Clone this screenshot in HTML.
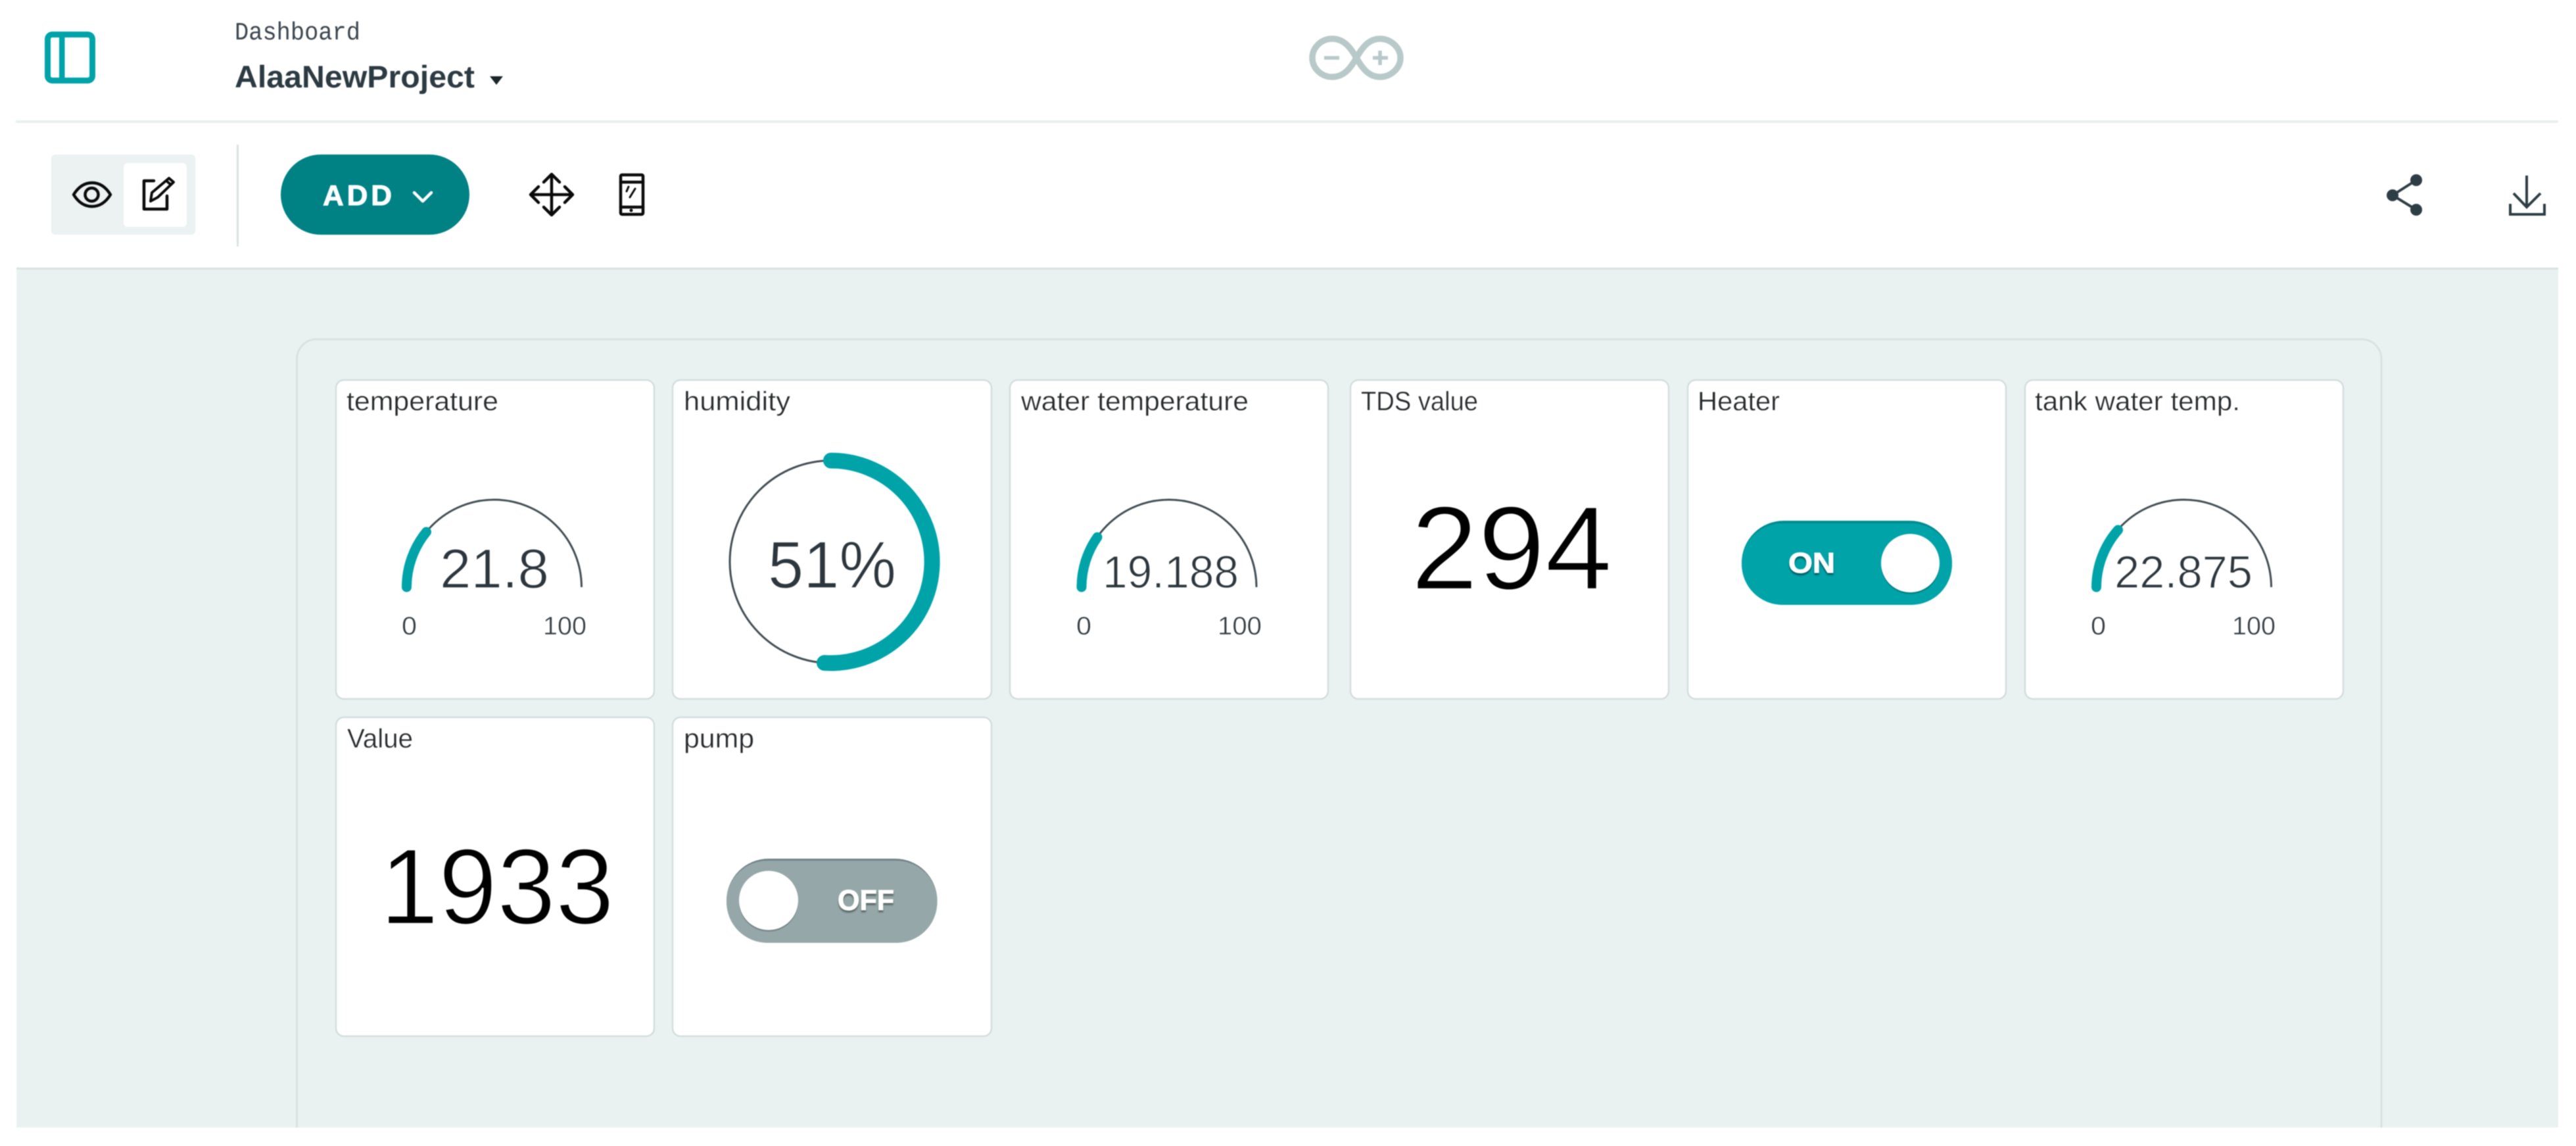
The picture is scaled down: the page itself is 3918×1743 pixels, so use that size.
<!DOCTYPE html>
<html><head><meta charset="utf-8"><title>Dashboard</title>
<style>
html,body{margin:0;padding:0;background:#fff;width:3918px;height:1743px;overflow:hidden}
svg{display:block;filter:blur(.8px)}
text{font-family:"Liberation Sans",Arial,sans-serif}
.t{font-size:41px;fill:#26292b;stroke:#fff;stroke-width:.4px}
.v{fill:#2c363c;stroke:#fff;stroke-width:1.2px}
.b{fill:#000;stroke:#fff;stroke-width:2.5px}
.l{font-size:39px;fill:#333b40;stroke:#fff;stroke-width:.5px}
.card{fill:#fff;stroke:#d2dddc;stroke-width:2.500}
.arc{fill:none;stroke:#424d53;stroke-width:3}
.teal{fill:none;stroke:#00a3a8;stroke-linecap:round}
.ic{fill:none;stroke:#0a0a0a;stroke-width:4.500;stroke-linecap:round;stroke-linejoin:round}
</style></head><body>
<svg width="3918" height="1743" viewBox="0 0 3918 1743" xmlns="http://www.w3.org/2000/svg">
<rect width="3918" height="1743" fill="#fff"/>
<!-- header -->
<rect x="72.500" y="52.500" width="68" height="70" rx="7" fill="none" stroke="#00a3a8" stroke-width="9"/>
<rect x="90" y="52" width="8.500" height="71" fill="#00a3a8"/>
<text x="357" y="60" textLength="191" lengthAdjust="spacingAndGlyphs" style="font-family:'Liberation Mono',monospace;font-size:38px;fill:#3c454e">Dashboard</text>
<text x="357" y="133" textLength="365" lengthAdjust="spacingAndGlyphs" style="font-size:47px;font-weight:700;fill:#2c3a42">AlaaNewProject</text>
<path d="M745 116H765L755 129Z" fill="#1d2529"/>
<g fill="none" stroke="#b8c9c9" stroke-width="9.500">
<path d="M2063 88C2054 72 2044 59 2026 59C2010 59 1996 72 1996 88C1996 104 2010 117 2026 117C2044 117 2054 104 2063 88C2072 72 2082 59 2099 59C2115 59 2130 72 2130 88C2130 104 2115 117 2099 117C2082 117 2072 104 2063 88Z"/>
<path d="M2014 88H2037M2088 88H2111M2099 77V99" stroke-width="5.500"/>
</g>
<rect x="24" y="183" width="3867" height="4" fill="#e9f0ef"/>
<!-- toolbar -->
<rect x="78" y="235" width="219" height="122" rx="6" fill="#ecf1f1"/>
<rect x="188" y="248" width="96" height="97" rx="6" fill="#fff"/>
<path class="ic" d="M112 296C120 283 130 278 140 278C150 278 160 283 168 296C160 309 150 314 140 314C130 314 120 309 112 296Z"/>
<circle class="ic" cx="139.500" cy="296" r="10"/>
<path class="ic" d="M234 275H219V318H254V298"/>
<path class="ic" style="stroke-width:4" d="M229 306L231 293L257 271L264 277L240 300ZM253 275L260 281"/>
<rect x="360" y="220" width="3" height="155" fill="#dae3e3"/>
<rect x="427" y="235" width="287" height="122" rx="61" fill="#008184"/>
<text x="491" y="312" textLength="105" lengthAdjust="spacing" style="font-size:44px;font-weight:700;fill:#fff;stroke:#fff;stroke-width:1px">ADD</text>
<path d="M630 293L643 306L656 293" fill="none" stroke="#fff" stroke-width="4.500" stroke-linecap="round" stroke-linejoin="round"/>
<path class="ic" d="M839 266V326M808 296H870M827 277L839 265L851 277M827 315L839 327L851 315M819 284L807 296L819 308M859 284L871 296L859 308"/>
<rect class="ic" x="944" y="266" width="34" height="60" rx="2"/>
<path class="ic" d="M944 277H978M944 315H978"/>
<circle cx="960" cy="320" r="2.500" fill="#0a0a0a"/>
<path class="ic" style="stroke-width:3" d="M956 284L953 291M966 287L958 300"/>
<g fill="#2e3d44"><circle cx="3675" cy="274" r="9"/><circle cx="3639" cy="297" r="9"/><circle cx="3675" cy="319" r="9"/></g>
<path d="M3675 274L3639 297L3675 319" fill="none" stroke="#2e3d44" stroke-width="4"/>
<path d="M3843 267V315M3823 294L3843 315L3864 294M3818 310V326H3870V310" fill="none" stroke="#2e3d44" stroke-width="4"/>
<!-- canvas -->
<rect x="25" y="408" width="3866" height="1307" fill="#eaf2f1"/>
<rect x="25" y="407" width="3866" height="3" fill="#d8e2e1"/>
<path d="M451.500 1715V546A30 30 0 0 1 481.500 516H3592A30 30 0 0 1 3622 546V1715" fill="none" stroke="#d8e2e1" stroke-width="3"/>
<!-- cards -->
<rect class="card" x="511" y="578" width="484" height="485" rx="12"/>
<rect class="card" x="1023" y="578" width="485" height="485" rx="12"/>
<rect class="card" x="1536" y="578" width="484" height="485" rx="12"/>
<rect class="card" x="2054" y="578" width="484" height="485" rx="12"/>
<rect class="card" x="2567" y="578" width="484" height="485" rx="12"/>
<rect class="card" x="3080" y="578" width="484" height="485" rx="12"/>
<rect class="card" x="511" y="1091" width="484" height="485" rx="12"/>
<rect class="card" x="1023" y="1091" width="485" height="485" rx="12"/>
<!-- titles -->
<text class="t" x="527" y="624" textLength="231" lengthAdjust="spacingAndGlyphs">temperature</text>
<text class="t" x="1040" y="624" textLength="162" lengthAdjust="spacingAndGlyphs">humidity</text>
<text class="t" x="1553" y="624" textLength="346" lengthAdjust="spacingAndGlyphs">water temperature</text>
<text class="t" x="2070" y="624" textLength="178" lengthAdjust="spacingAndGlyphs">TDS value</text>
<text class="t" x="2582" y="624" textLength="125" lengthAdjust="spacingAndGlyphs">Heater</text>
<text class="t" x="3095" y="624" textLength="312" lengthAdjust="spacingAndGlyphs">tank water temp.</text>
<text class="t" x="528" y="1137" textLength="100" lengthAdjust="spacingAndGlyphs">Value</text>
<text class="t" x="1040" y="1137" textLength="107" lengthAdjust="spacingAndGlyphs">pump</text>
<!-- gauge 1 -->
<path class="arc" d="M618.500 893A133 133 0 0 1 884.500 893"/>
<path class="teal" stroke-width="15" d="M618.500 893A133 133 0 0 1 648.500 809"/>
<text class="v" x="669" y="894" textLength="166" lengthAdjust="spacingAndGlyphs" font-size="84">21.8</text>
<text class="l" x="611" y="965" textLength="23" lengthAdjust="spacingAndGlyphs">0</text>
<text class="l" x="826" y="965" textLength="66" lengthAdjust="spacingAndGlyphs">100</text>
<!-- humidity -->
<circle cx="1264" cy="854.500" r="154" fill="none" stroke="#424d53" stroke-width="3"/>
<path class="teal" stroke-width="24" d="M1264 700.500A154 154 0 1 1 1254 1008.200"/>
<text class="v" x="1168" y="894" textLength="195" lengthAdjust="spacingAndGlyphs" font-size="101">51%</text>
<!-- gauge 3 -->
<path class="arc" d="M1645 893A133 133 0 0 1 1911 893"/>
<path class="teal" stroke-width="15" d="M1645 893A133 133 0 0 1 1669 817"/>
<text class="v" x="1677" y="894" textLength="207" lengthAdjust="spacingAndGlyphs" font-size="70">19.188</text>
<text class="l" x="1637" y="965" textLength="23" lengthAdjust="spacingAndGlyphs">0</text>
<text class="l" x="1852" y="965" textLength="67" lengthAdjust="spacingAndGlyphs">100</text>
<!-- 294 -->
<text class="b" x="2146" y="896" textLength="306" lengthAdjust="spacingAndGlyphs" font-size="181">294</text>
<!-- heater -->
<rect x="2649" y="792" width="320" height="128" rx="64" fill="#008b8f"/>
<rect x="2649" y="796" width="320" height="124" rx="62" fill="#00a3a8"/>
<circle cx="2905.500" cy="859" r="44.500" fill="#007f82"/>
<circle cx="2905.500" cy="856.500" r="44.500" fill="#fff"/>
<text x="2720" y="871" textLength="71" lengthAdjust="spacingAndGlyphs" style="font-size:44px;font-weight:700;fill:#fff;stroke:#fff;stroke-width:1px;filter:drop-shadow(0 3px 1px rgba(0,0,0,.45))">ON</text>
<!-- gauge 6 -->
<path class="arc" d="M3188.500 893A133 133 0 0 1 3454.500 893"/>
<path class="teal" stroke-width="15" d="M3188.500 893A133 133 0 0 1 3221.500 806"/>
<text class="v" x="3216" y="894" textLength="210" lengthAdjust="spacingAndGlyphs" font-size="70">22.875</text>
<text class="l" x="3180" y="965" textLength="23" lengthAdjust="spacingAndGlyphs">0</text>
<text class="l" x="3395" y="965" textLength="66" lengthAdjust="spacingAndGlyphs">100</text>
<!-- 1933 -->
<text class="b" x="578" y="1405" textLength="356" lengthAdjust="spacingAndGlyphs" font-size="164">1933</text>
<!-- pump -->
<rect x="1105" y="1306" width="320.500" height="128" rx="64" fill="#6f8285"/>
<rect x="1105" y="1309" width="320.500" height="125" rx="62" fill="#95a7a8"/>
<circle cx="1169" cy="1372" r="45" fill="#76888a"/>
<circle cx="1169" cy="1369.500" r="45" fill="#fff"/>
<text x="1274" y="1384" textLength="86" lengthAdjust="spacingAndGlyphs" style="font-size:44px;font-weight:700;fill:#fff;stroke:#fff;stroke-width:1px;filter:drop-shadow(0 3px 1px rgba(0,0,0,.4))">OFF</text>
</svg>
</body></html>
